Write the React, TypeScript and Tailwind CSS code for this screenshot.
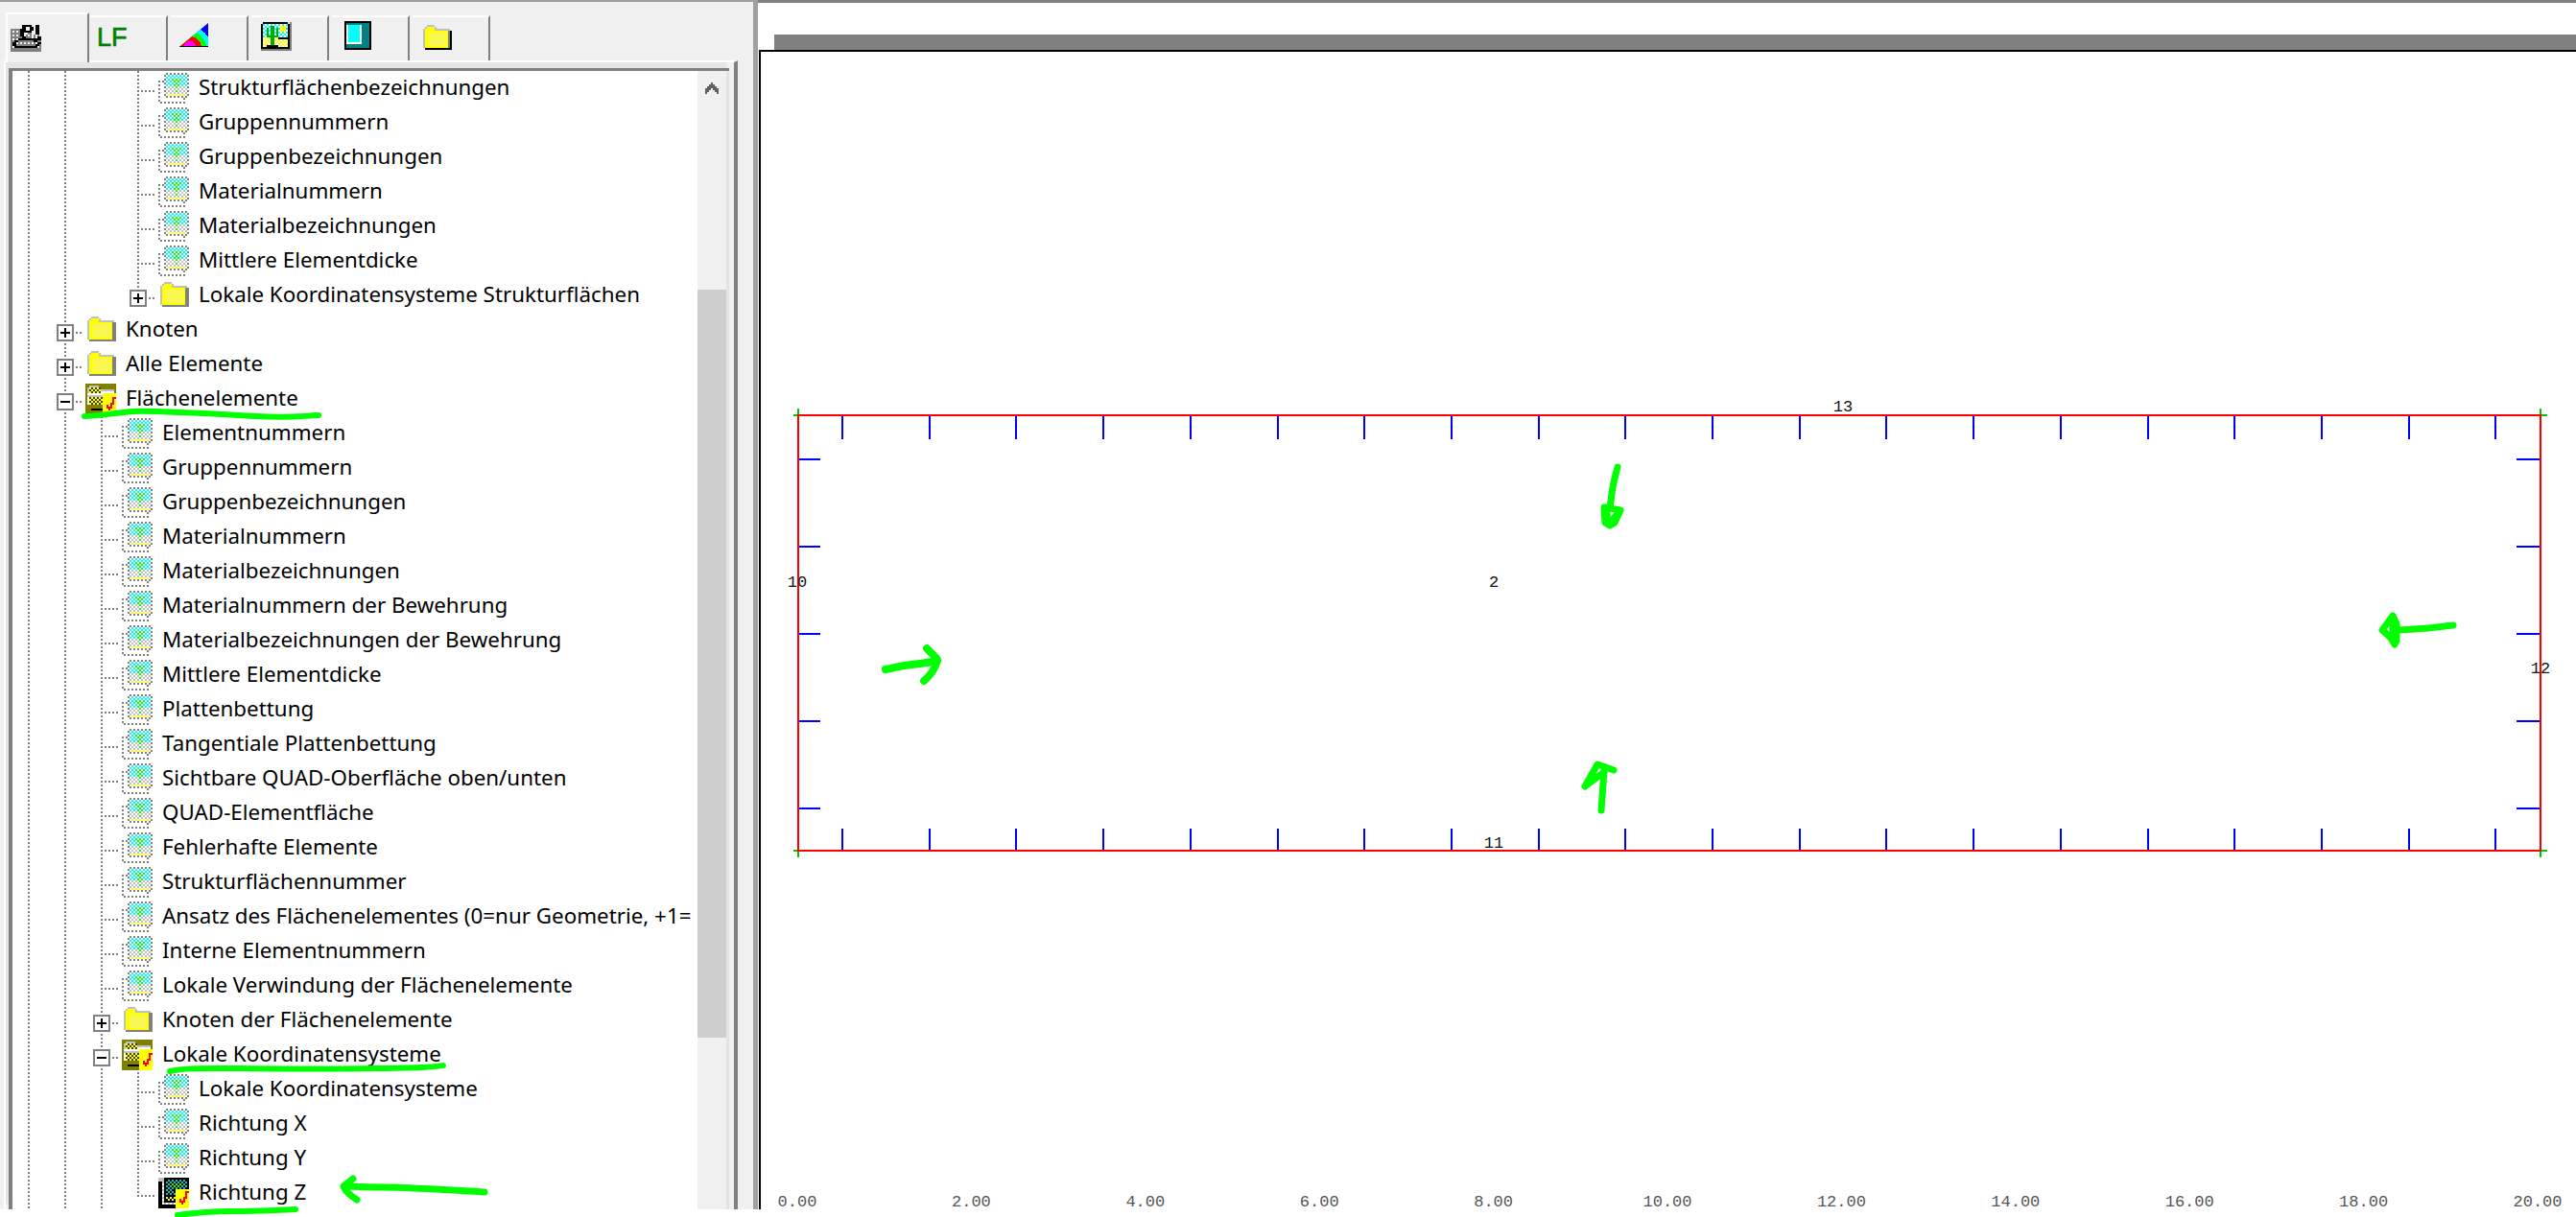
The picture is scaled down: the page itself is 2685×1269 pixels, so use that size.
import React from "react";

type PixFn = (x: number, y: number) => string | null;

const YEL = "#ffff00";
const GRY = "#808080";
const LGT = "#c0c0c0";
const CYN = "#00ffff";
const GRN = "#00ff00";
const RED = "#ff0000";
const BLK = "#000000";
const WHT = "#ffffff";

// small bitmap icon, each cell is 2 screen pixels
const Pix = ({ w, h, at, className }: { w: number; h: number; at: PixFn; className?: string }) => {
  const cells: React.ReactNode[] = [];
  for (let y = 0; y < h; y++) {
    for (let x = 0; x < w; x++) {
      const c = at(x, y);
      if (c) cells.push(<rect key={`${x}-${y}`} x={x} y={y} width={1} height={1} fill={c} />);
    }
  }
  return (
    <svg width={w * 2} height={h * 2} viewBox={`0 0 ${w} ${h}`} shapeRendering="crispEdges" className={className}>
      {cells}
    </svg>
  );
};

const CHECK = ["11,11", "11,12", "12,12", "12,13", "13,12", "13,11", "13,10", "14,10", "14,9", "14,8", "14,7", "15,7"];

const checkBox = (x: number, y: number) => {
  if (x >= 9 && y >= 5) return CHECK.includes(`${x},${y}`) ? RED : YEL;
  return null;
};

const TREE = ["9,3", "9,5", "9,7", "9,9", "8,4", "10,4", "8,6", "10,6", "7,3", "11,3"];

const docPix: PixFn = (x, y) => {
  const inFront = x >= 3 && x <= 15 && y >= 0 && y <= 12;
  if (inFront) {
    const odd = (x + y) % 2 === 0;
    if (x === 3 || x === 15 || y === 0 || y === 12) return odd ? GRY : null;
    if (TREE.includes(`${x},${y}`)) return GRN;
    if (y <= 4) return odd ? CYN : null;
    if (y <= 6) return odd ? (x < 8 || x > 10 ? CYN : LGT) : null;
    if (y === 11) return odd ? YEL : null;
    return odd ? LGT : null;
  }
  const back = (x === 0 && y >= 4) || (y === 15 && x <= 13) || (y === 4 && x <= 2) || (x === 13 && y >= 13);
  if (back) return (x + y) % 2 === 0 ? GRY : null;
  return null;
};

const selDocPix: PixFn = (x, y) => {
  const chk = checkBox(x, y);
  if (chk && y >= 6) return chk;
  if (y < 2 && x < 3) return LGT;
  if (x >= 3 && y <= 12) {
    if (x === 3 || x === 15 || y === 0 || y === 12) return BLK;
    if (TREE.includes(`${x},${y}`)) return y > 5 ? BLK : GRN;
    if (y <= 8) return (x + y) % 2 === 0 ? "#00c0c0" : BLK;
    if (y === 9) return BLK;
    return (x + y) % 2 === 0 ? YEL : BLK;
  }
  if (x <= 1 && y >= 2) return BLK;
  if (y >= 14 && x <= 9) return BLK;
  if (x >= 2 && y >= 2) return (x + y) % 2 === 0 ? LGT : null;
  return null;
};

const folderPix =
  (shade: string): PixFn =>
  (x, y) => {
    if (y === 0) return x >= 2 && x <= 5 ? LGT : null;
    if (y === 1) {
      if (x === 1 || x === 6) return LGT;
      return x > 1 && x < 6 ? YEL : null;
    }
    if (y === 2 && x >= 6 && x <= 13) return LGT;
    if (y === 12) return x >= 1 ? shade : null;
    if (x === 14) return y >= 3 ? shade : null;
    if (x === 0) return LGT;
    if (x === 13) return GRY;
    if (y < 3) return YEL;
    if (x >= 3 && x <= 11 && y >= 4 && y <= 10) return (x + y) % 2 === 0 ? YEL : "#f0f0a0";
    return YEL;
  };

const openFolderPix: PixFn = (x, y) => {
  const chk = checkBox(x, y);
  if (chk) return chk;
  if (y === 1 && x >= 2 && x <= 6) return LGT;
  if (y >= 2 && y <= 4 && x === 1) return LGT;
  if (y >= 2 && y <= 4 && x >= 2 && x <= 7) return (x + y) % 2 === 0 ? YEL : "#404000";
  if (y === 3 && x >= 8 && x <= 14) return LGT;
  if (y === 4 && x >= 8 && x <= 14) return WHT;
  if (y === 5 && x >= 1 && x <= 8) return WHT;
  if (y === 6 && x >= 1 && x <= 8) return LGT;
  if (y >= 7 && y <= 10 && x === 1) return WHT;
  if (y >= 7 && y <= 10 && x >= 2 && x <= 8) return (x + y) % 2 === 0 ? YEL : "#404000";
  if (y === 13 && x >= 3 && x <= 8) return BLK;
  return "#808000";
};

const STRUCT_MAP = [
  "......kkkkk..kk.",
  "......kk..kk.kk.",
  "gggggkkk..kk.kk.",
  "g.g.gkkkkkk..kk.",
  "gggggkk..gg..kk.",
  "g.g.gkk.g.g.g.g.",
  "ggggggkkggg.g.kk",
  "g.g.kkkkkkkkkkkk",
  "ggkkggggggggkkgg",
  "gkk.g.g.g.g.g.kk",
  "gkkggggggggggkkg",
  "g.kkkkkkkkkkkk.g",
  "gggggggggggggggg",
  "gggggggggggggggg",
];

const structPix: PixFn = (x, y) => {
  const c = STRUCT_MAP[y]?.[x];
  return c === "k" ? BLK : c === "g" ? GRY : null;
};

const cactusPix: PixFn = (x, y) => {
  if (x === 15 || y === 14) return GRY;
  if (x === 0 || y === 0 || x === 14 || y === 13) return (x === 0 && y === 0) || (x === 14 && y === 0) ? null : BLK;
  const stem = x === 5 && y >= 2 && y <= 11;
  const wide = x === 6 && y >= 2 && y <= 11;
  const arm = (y === 7 && x >= 3 && x <= 8) || ((x === 3 || x === 8) && y >= 3 && y <= 7);
  if (stem || wide || arm) return "#00b000";
  if (y === 12 && x >= 3 && x <= 8) return BLK;
  if (x >= 10 && x <= 12 && y >= 2 && y <= 4) return YEL;
  if (y === 8 && x >= 9) return BLK;
  if (y < 8) return (x + y) % 2 === 0 ? CYN : WHT;
  return (x + y) % 2 === 0 ? YEL : WHT;
};

const Box = ({ sign }: { sign: "+" | "-" }) => (
  <span className="absolute left-[10px] top-[12px] z-10 flex h-[18px] w-[18px] items-center justify-center border-2 border-[#808080] bg-white">
    <span className="relative block h-[2px] w-[10px] bg-black">
      {sign === "+" && <span className="absolute left-[4px] top-[-4px] block h-[10px] w-[2px] bg-black" />}
    </span>
  </span>
);

// one 38px wide column of the tree lines
const Cell = ({ line, stub, sign }: { line?: "full" | "end"; stub?: boolean; sign?: "+" | "-" }) => (
  <div className="relative h-9 w-[38px] shrink-0">
    {line === "full" && (
      <span className="absolute left-[18px] top-0 block h-9 w-[2px] bg-[repeating-linear-gradient(to_bottom,#808080_0_2px,transparent_2px_4px)]" />
    )}
    {line === "end" && (
      <span className="absolute left-[18px] top-0 block h-5 w-[2px] bg-[repeating-linear-gradient(to_bottom,#808080_0_2px,transparent_2px_4px)]" />
    )}
    {stub && (
      <span className="absolute left-[18px] top-5 block h-[2px] w-5 bg-[repeating-linear-gradient(to_right,#808080_0_2px,transparent_2px_4px)]" />
    )}
    {sign && <Box sign={sign} />}
  </div>
);

type Kind = "doc" | "sel" | "folder" | "open";
type Row = { t: string; d: number; k: Kind; s?: "+" | "-"; end?: boolean };

const D = (t: string, d: number, end?: boolean): Row => ({ t, d, k: "doc", end });

const ROWS: Row[] = [
  D("Strukturflächenbezeichnungen", 3),
  D("Gruppennummern", 3),
  D("Gruppenbezeichnungen", 3),
  D("Materialnummern", 3),
  D("Materialbezeichnungen", 3),
  D("Mittlere Elementdicke", 3),
  { t: "Lokale Koordinatensysteme Strukturflächen", d: 3, k: "folder", s: "+", end: true },
  { t: "Knoten", d: 1, k: "folder", s: "+" },
  { t: "Alle Elemente", d: 1, k: "folder", s: "+" },
  { t: "Flächenelemente", d: 1, k: "open", s: "-" },
  D("Elementnummern", 2),
  D("Gruppennummern", 2),
  D("Gruppenbezeichnungen", 2),
  D("Materialnummern", 2),
  D("Materialbezeichnungen", 2),
  D("Materialnummern der Bewehrung", 2),
  D("Materialbezeichnungen der Bewehrung", 2),
  D("Mittlere Elementdicke", 2),
  D("Plattenbettung", 2),
  D("Tangentiale Plattenbettung", 2),
  D("Sichtbare QUAD-Oberfläche oben/unten", 2),
  D("QUAD-Elementfläche", 2),
  D("Fehlerhafte Elemente", 2),
  D("Strukturflächennummer", 2),
  D("Ansatz des Flächenelementes (0=nur Geometrie, +1=", 2),
  D("Interne Elementnummern", 2),
  D("Lokale Verwindung der Flächenelemente", 2),
  { t: "Knoten der Flächenelemente", d: 2, k: "folder", s: "+" },
  { t: "Lokale Koordinatensysteme", d: 2, k: "open", s: "-" },
  D("Lokale Koordinatensysteme", 3),
  D("Richtung X", 3),
  D("Richtung Y", 3),
  { t: "Richtung Z", d: 3, k: "sel", end: true },
];

const RowIcon = ({ k }: { k: Kind }) => {
  if (k === "doc") return <Pix w={16} h={16} at={docPix} />;
  if (k === "sel") return <Pix w={16} h={16} at={selDocPix} />;
  if (k === "open") return <Pix w={16} h={16} at={openFolderPix} />;
  return <Pix w={15} h={13} at={folderPix(GRY)} className="ml-[2px] mt-[2px]" />;
};

const TreeRow = ({ row, i }: { row: Row; i: number }) => {
  const col2 = row.d === 3 && i > 20;
  const guides = [true, true, col2];
  return (
    <div className="flex h-9 -ml-[2px] items-start">
      {guides.slice(0, row.d).map((on, n) => (
        <Cell key={n} line={on ? "full" : undefined} />
      ))}
      <Cell line={row.end ? "end" : "full"} stub sign={row.s} />
      <div className="ml-[2px] mt-[2px] h-8 w-8 shrink-0">
        <RowIcon k={row.k} />
      </div>
      <span className="ml-[10px] whitespace-nowrap text-[22.35px] leading-[34px] text-black">{row.t}</span>
    </div>
  );
};

const Tab = ({ first, children }: { first?: boolean; children: React.ReactNode }) => (
  <div
    className={
      first
        ? "relative z-10 -mb-[2px] mr-[1px] flex h-[52px] w-[87px] items-start justify-start border-l-2 border-r-2 border-t-2 border-l-white border-r-[#808080] border-t-white bg-[#f0f0f0] pl-[3px] pt-[9px]"
        : "mr-[3px] flex h-[47px] w-[81px] items-start justify-start border-r-2 border-t-2 border-r-[#808080] border-t-white bg-[#f0f0f0] pl-[7px] pt-[4px]"
    }
  >
    {children}
  </div>
);

const RainbowIcon = () => (
  <svg width="32" height="26" viewBox="0 0 32 26" className="ml-[2px] mt-[2px]" shapeRendering="crispEdges">
    <defs>
      <clipPath id="tri">
        <polygon points="0,25 30,0 30,25" />
      </clipPath>
    </defs>
    <g clipPath="url(#tri)">
      <rect x="0" y="0" width="32" height="26" fill="#0000ff" />
      <circle cx="11" cy="26" r="22" fill="#00ffff" />
      <circle cx="11" cy="26" r="17" fill="#00ff00" />
      <circle cx="11" cy="26" r="12" fill="#ff0000" />
      <circle cx="11" cy="26" r="7" fill="#ff00ff" />
      <rect x="0" y="24" width="32" height="2" fill="#000" />
    </g>
  </svg>
);

const BookIcon = () => (
  <div className="ml-[6px] h-[30px] w-[28px] border-2 border-black bg-[#008080]">
    <div className="mt-[2px] h-[20px] w-[16px] border-b-2 border-l-2 border-r-2 border-white bg-[#00ffff]" />
  </div>
);

const Mono = "font-['Liberation_Mono',monospace]";

const Chart = () => {
  const top = Array.from({ length: 20 }, (_, i) => 878 + i * 90.7);
  const side = [479, 570, 661, 752, 843];
  const axis = Array.from({ length: 11 }, (_, i) => i * 2);
  return (
    <svg width="1892" height="1207" className="block overflow-visible" shapeRendering="crispEdges">
      <g transform="translate(-793,-54)">
        <g fill="#00c800">
          <rect x="827" y="432" width="5" height="2" />
          <rect x="831" y="426" width="2" height="7" />
          <rect x="2648" y="432" width="7" height="2" />
          <rect x="2647" y="426" width="2" height="7" />
          <rect x="827" y="886" width="5" height="2" />
          <rect x="831" y="887" width="2" height="7" />
          <rect x="2648" y="886" width="7" height="2" />
          <rect x="2647" y="887" width="2" height="7" />
        </g>
        <g fill="#0000ff">
          {top.map((x) => (
            <React.Fragment key={x}>
              <rect x={Math.round(x) - 1} y={434} width={2} height={24} />
              <rect x={Math.round(x) - 1} y={864} width={2} height={22} />
            </React.Fragment>
          ))}
          {side.map((y) => (
            <React.Fragment key={y}>
              <rect x={833} y={y - 1} width={22} height={2} />
              <rect x={2623} y={y - 1} width={24} height={2} />
            </React.Fragment>
          ))}
        </g>
        <g fill="#ff0000">
          <rect x="831" y="432" width="1818" height="2" />
          <rect x="831" y="886" width="1818" height="2" />
          <rect x="831" y="432" width="2" height="456" />
          <rect x="2647" y="432" width="2" height="456" />
        </g>
        <g className={`${Mono} text-[17px]`} fill="#111111" textAnchor="middle" shapeRendering="auto">
          <text x="1921" y="429">13</text>
          <text x="831" y="612">10</text>
          <text x="1557" y="612">2</text>
          <text x="1557" y="884">11</text>
          <text x="2648" y="702">12</text>
        </g>
        <g className={`${Mono} text-[17px]`} fill="#555555" textAnchor="middle" shapeRendering="auto">
          {axis.map((n, i) => (
            <text key={n} x={831 + i * 181.4} y={1258}>
              {n.toFixed(2)}
            </text>
          ))}
        </g>
      </g>
    </svg>
  );
};

// the green pen marks drawn over the whole screenshot
const Marks = () => (
  <svg
    width="2685"
    height="1269"
    className="pointer-events-none absolute left-0 top-0 z-20"
    fill="none"
    stroke="#00ff00"
    strokeWidth="6"
    strokeLinecap="round"
    strokeLinejoin="round"
  >
    <path d="M88 434 C 105 434 120 430 140 429 S 230 432 267 434 S 310 434 332 433" />
    <path d="M177 1117 C 190 1114 205 1114 230 1114 S 340 1115 393 1114 S 445 1113 462 1111" />
    <path d="M185 1267 C 200 1265 215 1263 240 1263 S 290 1262 308 1261" />
    <path strokeWidth="7" d="M505 1243 C 470 1241 430 1238 400 1238 S 370 1237 358 1237 M368 1229 L358 1237 C 360 1243 366 1247 372 1251" />
    <path strokeWidth="8" d="M923 698 C 935 696 938 694 950 693 S 965 691 977 689 M966 676 C 970 681 975 684 977 688 C 975 697 970 704 963 710" />
    <path strokeWidth="7" d="M2557 652 C 2540 654 2525 656 2500 657 M2483 657 L2494 642 L2498 650 L2498 668 L2496 672 L2491 664 Z M2494 646 L2494 668" />
    <path strokeWidth="7" d="M1686 487 C 1684 495 1681 505 1680 515 L1678 530 M1672 529 L1689 532 L1683 545 L1678 548 L1673 545 Z M1675 535 L1676 545 M1680 543 L1684 538" />
    <path strokeWidth="7" d="M1669 845 L1672 803 M1652 820 L1665 797 L1682 803 M1652 820 L1672 805" />
  </svg>
);

export default function App() {
  return (
    <div className="relative h-[1269px] w-[2685px] overflow-hidden bg-white font-['Noto_Sans',sans-serif]">
      <div className="flex h-[1261px]">
        <div className="flex h-full w-[785px] shrink-0 flex-col border-t-2 border-[#a0a0a0] bg-[#f0f0f0]">
          <div className="flex h-[61px] shrink-0 items-end pl-[6px]">
            <Tab first>
              <Pix w={16} h={14} at={structPix} className="mt-[2px]" />
            </Tab>
            <Tab>
              <span className="mt-[2px] font-['Liberation_Sans',sans-serif] text-[27px] leading-[30px] text-[#008000] [-webkit-text-stroke:0.6px_#008000]">LF</span>
            </Tab>
            <Tab>
              <RainbowIcon />
            </Tab>
            <Tab>
              <Pix w={16} h={15} at={cactusPix} className="ml-[3px] mt-[1px]" />
            </Tab>
            <Tab>
              <BookIcon />
            </Tab>
            <Tab>
              <Pix w={15} h={13} at={folderPix(BLK)} className="ml-[4px] mt-[4px]" />
            </Tab>
          </div>
          <div className="ml-[4px] flex min-h-0 w-[765px] flex-1 border-l-2 border-r-4 border-t-2 border-l-white border-r-[#808080] border-t-white pl-[3px] pr-[5px] pt-[6px]">
            <div className="flex min-h-0 w-full border-l-4 border-t-[3px] border-[#808080] shadow-[-3px_-6px_0_#e5e5e5]">
              <div className="min-w-0 flex-1 overflow-hidden bg-white">
                {ROWS.map((r, i) => (
                  <TreeRow key={i} row={r} i={i} />
                ))}
              </div>
              <div className="flex w-[33px] shrink-0 flex-col border-r-[3px] border-[#e3e3e3] bg-[#f0f0f0]">
                <div className="flex h-[228px] shrink-0 justify-center pt-[12px]">
                  <svg width="14" height="12" viewBox="0 0 14 12" shapeRendering="crispEdges">
                    <path d="M6 0h2v2h2v2h2v2h2v6h-2v-2h-2v-2h-2v-2h-2v2h-2v2h-2v2h-2v-6h2v-2h2v-2h2z" fill="#606060" />
                  </svg>
                </div>
                <div className="h-[780px] w-full shrink-0 bg-[#cdcdcd]" />
              </div>
            </div>
          </div>
        </div>
        <div className="w-[5px] shrink-0 bg-[#a0a0a0]" />
        <div className="flex min-w-0 flex-1 flex-col border-t-[3px] border-[#808080] bg-white">
          <div className="ml-[17px] mt-[33px] h-4 shrink-0 bg-[#808080]" />
          <div className="ml-[1px] min-h-0 flex-1 border-l-[2px] border-t-[2px] border-black bg-white">
            <Chart />
          </div>
        </div>
      </div>
      <Marks />
    </div>
  );
}
